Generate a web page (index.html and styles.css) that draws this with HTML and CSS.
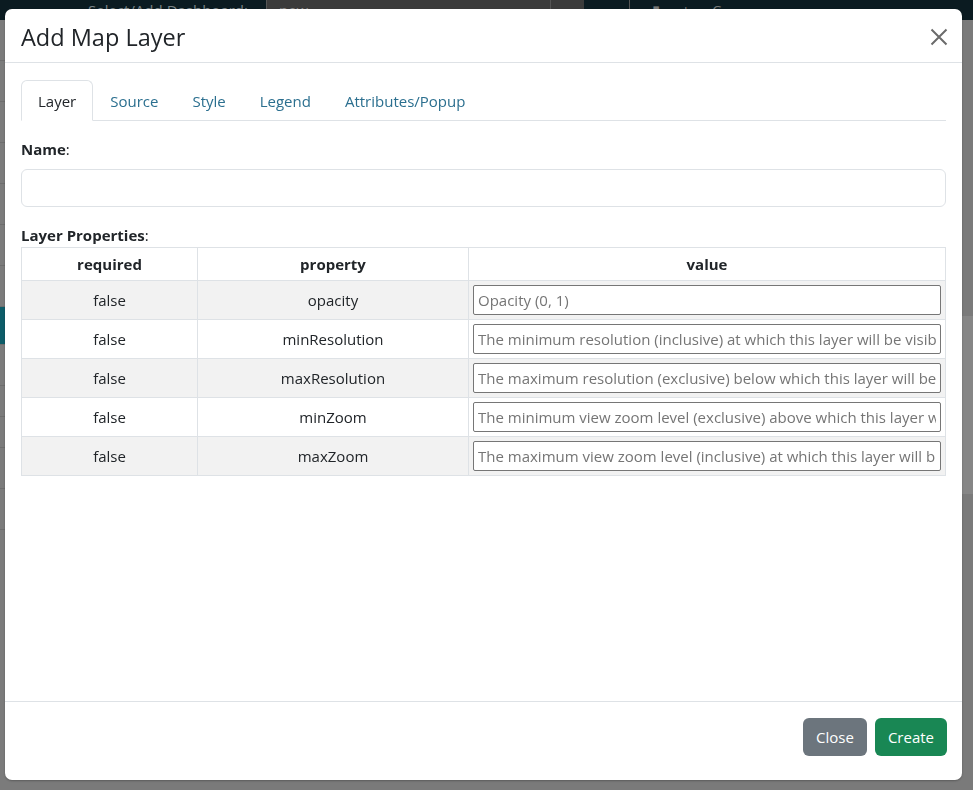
FILE: index.html
```html
<!DOCTYPE html>
<html lang="en">
<head>
<meta charset="utf-8">
<title>Add Map Layer</title>
<link rel="stylesheet" href="styles.css">
</head>
<body>
<div class="page">
  <header class="topbar">
    <span class="topbar-label">Select/Add Dashboard:</span>
    <div class="topbar-select"><span>new</span><span class="caret">&#8964;</span></div>
    <div class="topbar-icons">
      <span class="ti">&#8249;</span><span class="ti sep"></span><span class="ti">&#9646;</span><span class="ti">+</span><span class="ti">C</span>
    </div>
  </header>
  <div class="page-main">
    <aside class="sidebar">
      <div class="side-row"></div>
      <div class="side-row"></div>
      <div class="side-row"></div>
      <div class="side-row"></div>
      <div class="side-row"></div>
      <div class="side-row"></div>
      <div class="side-row"></div>
      <div class="side-row active"></div>
      <div class="side-row"></div>
      <div class="side-row red"><span>&#9635;</span></div>
      <div class="side-row red"><span>&#9635;</span></div>
      <div class="side-row"></div>
      <div class="side-row"></div>
    </aside>
    <div class="map">
      <div class="map-band"></div>
      <div class="map-band light"></div>
      <div class="map-band"></div>
    </div>
  </div>
</div>

<div class="modal" role="dialog" aria-labelledby="modal-title">
  <div class="modal-header">
    <h5 class="modal-title" id="modal-title">Add Map Layer</h5>
    <button class="btn-close" aria-label="Close">
      <svg width="18" height="18" viewBox="0 0 18 18"><path d="M1.5 1.5 L16.5 16.5 M16.5 1.5 L1.5 16.5" stroke="#6b6b6b" stroke-width="2" fill="none"/></svg>
    </button>
  </div>
  <div class="modal-body">
    <ul class="nav-tabs">
      <li><a class="nav-link active">Layer</a></li>
      <li><a class="nav-link">Source</a></li>
      <li><a class="nav-link">Style</a></li>
      <li><a class="nav-link">Legend</a></li>
      <li><a class="nav-link">Attributes/Popup</a></li>
    </ul>
    <div class="tab-content">
      <label class="field-label"><b>Name</b>:</label>
      <input class="form-control" type="text">
      <label class="field-label props-label"><b>Layer Properties</b>:</label>
      <table class="props">
        <colgroup><col class="c1"><col class="c2"><col class="c3"></colgroup>
        <thead>
          <tr><th>required</th><th>property</th><th>value</th></tr>
        </thead>
        <tbody>
          <tr><td>false</td><td>opacity</td><td><input class="cell-input" placeholder="Opacity (0, 1)"></td></tr>
          <tr><td>false</td><td>minResolution</td><td><input class="cell-input" placeholder="The minimum resolution (inclusive) at which this layer will be visible."></td></tr>
          <tr><td>false</td><td>maxResolution</td><td><input class="cell-input" placeholder="The maximum resolution (exclusive) below which this layer will be visible."></td></tr>
          <tr><td>false</td><td>minZoom</td><td><input class="cell-input" placeholder="The minimum view zoom level (exclusive) above which this layer will be visible."></td></tr>
          <tr><td>false</td><td>maxZoom</td><td><input class="cell-input" placeholder="The maximum view zoom level (inclusive) at which this layer will be visible."></td></tr>
        </tbody>
      </table>
    </div>
  </div>
  <div class="modal-footer">
    <button class="btn btn-secondary">Close</button>
    <button class="btn btn-success">Create</button>
  </div>
</div>
</body>
</html>
```
FILE: styles.css
```css
* { box-sizing: border-box; }
html, body { margin: 0; padding: 0; height: 100%; }
body {
  font-family: "Open Sans", "Noto Sans", "Liberation Sans", sans-serif;
  font-size: 15px;
  color: #212529;
  background: #7f7f7f;
  overflow: hidden;
}

/* dimmed page behind the dialog */
.page { height: 100%; display: flex; flex-direction: column; }
.topbar {
  height: 20px;
  background: #0b1b21;
  display: flex;
  align-items: center;
  padding-left: 88px;
  gap: 18px;
  color: #7a8387;
  font-size: 15px;
  overflow: hidden;
}
.topbar-label { white-space: nowrap; }
.topbar-select {
  width: 318px; height: 20px;
  background: #3b3b3b;
  border-left: 1px solid #555;
  display: flex; justify-content: space-between; padding: 0 12px; color: #8a8a8a;
}
.topbar-select .caret { border-left: 1px solid #555; padding-left: 8px; }
.topbar-icons { display: flex; gap: 22px; color: #777; }
.topbar-icons .sep { width: 1px; background: #555; height: 14px; }
.page-main { flex: 1; display: flex; }
.sidebar { width: 40px; background: #7b7b7b; }
.side-row { height: 41px; border-bottom: 1px solid #6e6e6e; }
.side-row.active { background: #0d5c68; height: 38px; }
.side-row.red { height: 31px; color: #8b1010; font-size: 12px; text-align: right; padding-top: 6px; }
.map { flex: 1; display: flex; flex-direction: column; background: #7a7a7a; }
.map-band { flex: 1; }
.map-band.light { background: #868686; flex: 0.6; }

/* dialog */
.modal {
  position: fixed;
  left: 5px; top: 9px;
  width: 957px; height: 771px;
  background: #fff;
  border-radius: 7px;
  display: flex;
  flex-direction: column;
  box-shadow: 0 1px 2px rgba(0,0,0,0.25);
}
.modal-header {
  height: 54px;
  border-bottom: 1px solid #dee2e6;
  display: flex;
  align-items: center;
  justify-content: space-between;
  padding: 0 16px;
  flex-shrink: 0;
}
.modal-title {
  margin: 0;
  font-size: 23.5px;
  font-weight: 500;
  line-height: 1.2;
  color: #212529;
  position: relative;
  top: 2px;
}
.btn-close {
  border: 0; background: transparent; padding: 0; width: 18px; height: 18px;
  margin-right: -2px; cursor: pointer; position: relative; top: 1px;
}
.btn-close svg { display: block; }

.modal-body { flex: 1; padding: 17px 16px 16px; }
.nav-tabs {
  list-style: none;
  margin: 0; padding: 0;
  display: flex;
  border-bottom: 1px solid #dee2e6;
}
.nav-tabs li { margin-bottom: -1px; }
.nav-link {
  display: block;
  padding: 8px 16px 7px;
  line-height: 24px;
  color: #2b6f8f;
  border: 1px solid transparent;
  border-top-left-radius: 6px;
  border-top-right-radius: 6px;
  cursor: pointer;
}
.nav-link.active {
  color: #212529;
  background: #fff;
  border-color: #dee2e6 #dee2e6 #fff;
}
.tab-content { padding-top: 16px; }
.field-label { display: block; line-height: 24px; }
.field-label b { font-weight: 700; }
.form-control {
  display: block;
  width: 100%;
  height: 38px;
  margin-top: 8px;
  border: 1px solid #dee2e6;
  border-radius: 6px;
  padding: 6px 12px;
  font: inherit;
}
.props-label { margin-top: 16px; }
.props {
  width: 100%;
  border-collapse: collapse;
  table-layout: fixed;
}
.props col.c1 { width: 176px; }
.props col.c2 { width: 271px; }
.props th, .props td {
  border: 1px solid #dee2e6;
  text-align: center;
  padding: 4px;
  line-height: 24px;
}
.props th { font-weight: 700; height: 33px; padding: 4px; }
.props td { height: 39px; }
.props tbody tr:nth-child(odd) td { background: #f2f2f2; }
.cell-input {
  display: block;
  width: 100%;
  height: 30px;
  border: 1px solid #767676;
  border-radius: 2px;
  padding: 1px 4px;
  font: inherit;
  background: #fff;
}
.cell-input::placeholder { color: #757575; }

.modal-footer {
  height: 79px;
  border-top: 1px solid #dee2e6;
  display: flex;
  justify-content: flex-end;
  align-items: flex-start;
  gap: 8px;
  padding: 16px 15px 0;
  flex-shrink: 0;
}
.btn {
  height: 38px;
  padding: 6px 13px;
  border: 0;
  border-radius: 6px;
  color: #fff;
  font: inherit;
  line-height: 24px;
}
.btn-secondary { background: #6c757d; }
.btn-success { background: #198754; }
```
